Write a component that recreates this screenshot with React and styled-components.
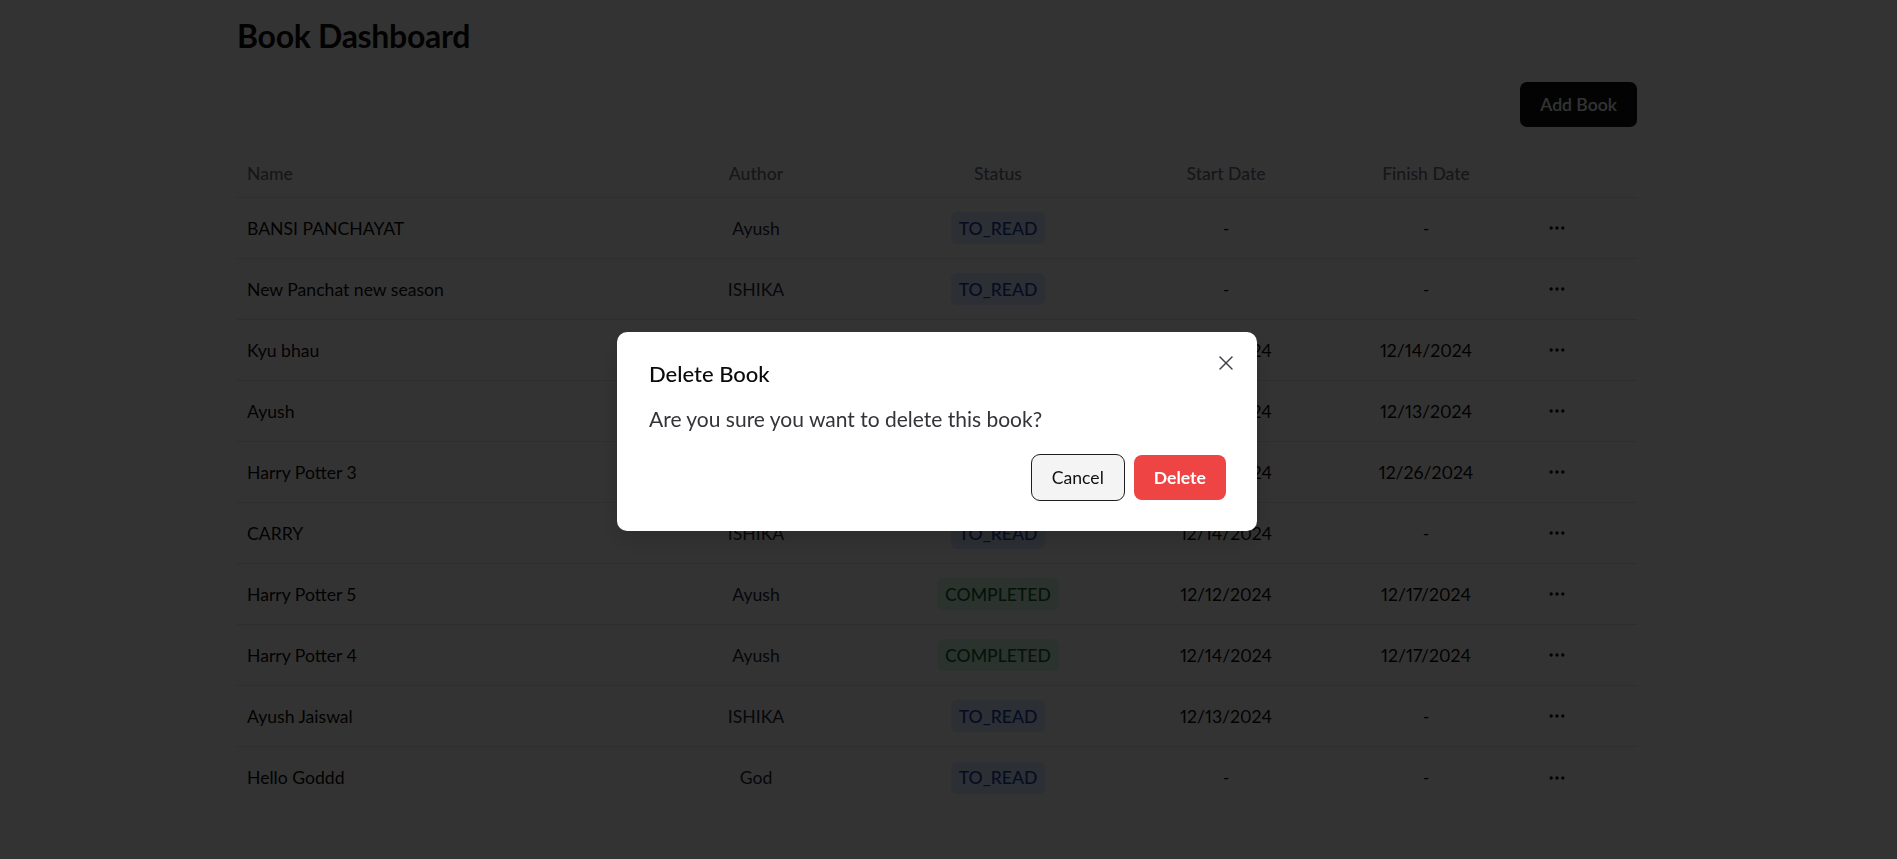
import styled, { createGlobalStyle } from 'styled-components';
import { X, Ellipsis } from 'lucide-react';

const GlobalStyle = createGlobalStyle`
  html, body {
    margin: 0;
    padding: 0;
    background: #ffffff;
  }
  body {
    font-family: Lato, "Open Sans", sans-serif;
    color: #0a0a0a;
  }
  * {
    box-sizing: border-box;
  }
`;

const Page = styled.div`
  min-height: 859px;
  padding: 16.4px 23px 0 0;
`;

const Container = styled.main`
  width: 1400px;
  margin: 0 auto;
`;

const Title = styled.h1`
  margin: 0;
  font-size: 32px;
  line-height: 39.6px;
  font-weight: 700;
  letter-spacing: -0.3px;
  color: #0a0a0a;
`;

const Toolbar = styled.div`
  display: flex;
  justify-content: flex-end;
  margin: 26px 0 22.4px;
`;

const PrimaryButton = styled.button`
  height: 45px;
  padding: 0 20px;
  border: none;
  border-radius: 7px;
  background: #0f0f0f;
  color: #ffffff;
  font-family: inherit;
  font-size: 17.6px;
  font-weight: 600;
`;

const Table = styled.table`
  width: 100%;
  table-layout: fixed;
  border-collapse: separate;
  border-spacing: 0;
`;

const Th = styled.th`
  height: 49px;
  padding: 0 10px;
  font-size: 17.6px;
  font-weight: 500;
  color: #6b7280;
  text-align: ${(p) => p.$align || 'center'};
  border-bottom: 1px solid #e5e7eb;
`;

const Td = styled.td`
  height: 61px;
  padding: 0 10px;
  font-size: 17.6px;
  font-variant-numeric: proportional-nums;
  color: ${(p) => (p.$muted ? '#1f2937' : '#0a0a0a')};
  text-align: ${(p) => p.$align || 'center'};
  border-bottom: ${(p) => (p.$last ? 'none' : '1px solid #e5e7eb')};
`;

const ActionCell = styled(Td)`
  text-align: left;
  padding-left: 11px;
`;

const Badge = styled.span`
  display: inline-flex;
  align-items: center;
  height: 32px;
  padding: 0 8px;
  border-radius: 6px;
  font-weight: 500;
  background: ${(p) => (p.$status === 'COMPLETED' ? '#dcfce7' : '#dbeafe')};
  color: ${(p) => (p.$status === 'COMPLETED' ? '#166534' : '#1e40af')};
`;

const DotsButton = styled.button`
  display: inline-flex;
  align-items: center;
  justify-content: center;
  width: 32px;
  height: 32px;
  padding: 0;
  border: none;
  background: transparent;
  color: #0a0a0a;
`;

const Overlay = styled.div`
  position: fixed;
  inset: 0;
  display: flex;
  align-items: center;
  justify-content: center;
  padding: 4px 23px 0 0;
  background: rgba(0, 0, 0, 0.8);
`;

const Dialog = styled.div`
  position: relative;
  width: 640px;
  padding: 26.4px 31px 29.7px 32px;
  border-radius: 10px;
  background: #ffffff;
  box-shadow: 0 10px 25px rgba(0, 0, 0, 0.15);
`;

const DialogTitle = styled.h2`
  margin: 0;
  font-size: 22px;
  line-height: 30.8px;
  font-weight: 500;
  color: #0a0a0a;
`;

const DialogText = styled.p`
  margin: 14.3px 0 0;
  font-size: 21px;
  line-height: 30px;
  color: #333338;
`;

const DialogActions = styled.div`
  display: flex;
  justify-content: flex-end;
  align-items: center;
  gap: 9px;
  margin-top: 20.5px;
`;

const CancelButton = styled.button`
  height: 47px;
  padding: 0 20px;
  border: 1.5px solid #1f1f1f;
  border-radius: 9px;
  background: #f4f4f5;
  color: #111111;
  font-family: inherit;
  font-size: 17.6px;
`;

const DeleteButton = styled.button`
  height: 45px;
  padding: 0 20px;
  border: none;
  border-radius: 8px;
  background: #ef4444;
  color: #ffffff;
  font-family: inherit;
  font-size: 17.6px;
  font-weight: 700;
`;

const CloseButton = styled.button`
  position: absolute;
  top: 19px;
  right: 19px;
  display: flex;
  width: 24px;
  height: 24px;
  padding: 0;
  border: none;
  background: transparent;
  color: #3f3f46;
`;

const books = [
  { name: 'BANSI PANCHAYAT', author: 'Ayush', status: 'TO_READ', start: '-', finish: '-' },
  { name: 'New Panchat new season', author: 'ISHIKA', status: 'TO_READ', start: '-', finish: '-' },
  { name: 'Kyu bhau', author: 'Ayush', status: 'COMPLETED', start: '12/12/2024', finish: '12/14/2024' },
  { name: 'Ayush', author: 'Ayush', status: 'COMPLETED', start: '12/12/2024', finish: '12/13/2024' },
  { name: 'Harry Potter 3', author: 'Ayush', status: 'COMPLETED', start: '12/14/2024', finish: '12/26/2024' },
  { name: 'CARRY', author: 'ISHIKA', status: 'TO_READ', start: '12/14/2024', finish: '-' },
  { name: 'Harry Potter 5', author: 'Ayush', status: 'COMPLETED', start: '12/12/2024', finish: '12/17/2024' },
  { name: 'Harry Potter 4', author: 'Ayush', status: 'COMPLETED', start: '12/14/2024', finish: '12/17/2024' },
  { name: 'Ayush Jaiswal', author: 'ISHIKA', status: 'TO_READ', start: '12/13/2024', finish: '-' },
  { name: 'Hello Goddd', author: 'God', status: 'TO_READ', start: '-', finish: '-' },
];

const App = () => {
  return (
    <>
      <GlobalStyle />
      <Page>
        <Container>
          <Title>Book Dashboard</Title>
          <Toolbar>
            <PrimaryButton>Add Book</PrimaryButton>
          </Toolbar>
          <Table>
            <colgroup>
              <col style={{ width: 409 }} />
              <col style={{ width: 220 }} />
              <col style={{ width: 264 }} />
              <col style={{ width: 192 }} />
              <col style={{ width: 208 }} />
              <col style={{ width: 107 }} />
            </colgroup>
            <thead>
              <tr>
                <Th $align="left">Name</Th>
                <Th>Author</Th>
                <Th>Status</Th>
                <Th>Start Date</Th>
                <Th>Finish Date</Th>
                <Th />
              </tr>
            </thead>
            <tbody>
              {books.map((book, i) => {
                const last = i === books.length - 1;
                return (
                  <tr key={book.name}>
                    <Td $align="left" $last={last}>{book.name}</Td>
                    <Td $muted $last={last}>{book.author}</Td>
                    <Td $last={last}>
                      <Badge $status={book.status}>{book.status}</Badge>
                    </Td>
                    <Td $last={last}>{book.start}</Td>
                    <Td $last={last}>{book.finish}</Td>
                    <ActionCell $last={last}>
                      <DotsButton>
                        <Ellipsis size={20} strokeWidth={2} />
                      </DotsButton>
                    </ActionCell>
                  </tr>
                );
              })}
            </tbody>
          </Table>
        </Container>
      </Page>
      <Overlay>
        <Dialog>
          <DialogTitle>Delete Book</DialogTitle>
          <DialogText>Are you sure you want to delete this book?</DialogText>
          <DialogActions>
            <CancelButton>Cancel</CancelButton>
            <DeleteButton>Delete</DeleteButton>
          </DialogActions>
          <CloseButton>
            <X size={24} strokeWidth={1.4} />
          </CloseButton>
        </Dialog>
      </Overlay>
    </>
  );
};

export default App;
